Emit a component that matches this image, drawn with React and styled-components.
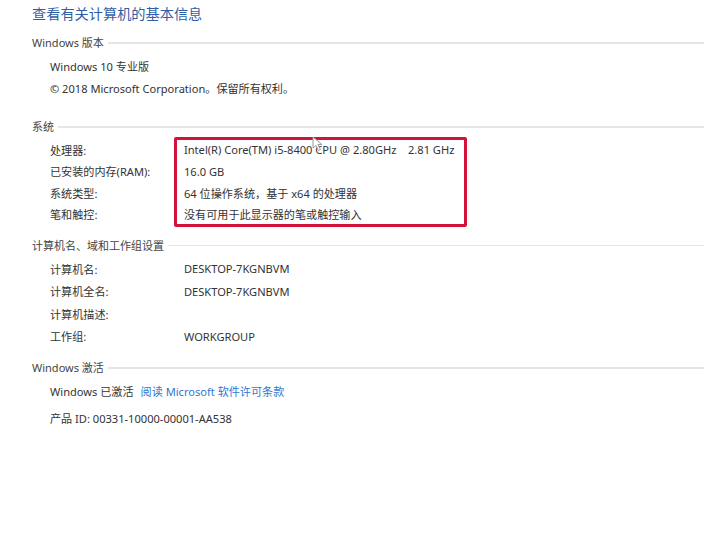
import React from "react";
import styled, { createGlobalStyle } from "styled-components";

const GlobalStyle = createGlobalStyle`
	html, body {
		margin: 0;
		padding: 0;
		background: #fff;
	}
	body {
		font-family: "Segoe UI", "Noto Sans", "Noto Sans CJK SC", sans-serif;
		color: #333;
	}
`;

const Page = styled.div`
	width: 704px;
	height: 534px;
	padding-left: 32px;
	box-sizing: border-box;
	overflow: hidden;
	position: relative;
`;

const Title = styled.h1`
	margin: 0;
	height: 27px;
	line-height: 27px;
	font-size: 14.2px;
	font-weight: 400;
	color: #2f5ea6;
	font-family: "Noto Sans CJK SC", sans-serif;
`;

const Section = styled.section`
	margin-top: ${(p) => p.$top}px;
`;

const SectionHeader = styled.div`
	display: flex;
	align-items: center;
	height: 22px;
	font-size: 11px;
	color: #444;
	&::after {
		content: "";
		flex: 1;
		height: 1.5px;
		margin: 2px 0 0 4px;
		background: #e6e6e6;
	}
`;

const Rows = styled.div`
	position: relative;
	padding: 2px 0 0 18px;
`;

const Row = styled.div`
	display: flex;
	align-items: center;
	height: ${(p) => p.$h || 22}px;
	margin-top: ${(p) => p.$gap || 0}px;
	font-size: 11.1px;
	color: #333;
	white-space: nowrap;
`;

const Label = styled.span`
	width: 134px;
	flex-shrink: 0;
`;

const Value = styled.span``;

const Link = styled.a`
	color: #2f78d2;
	margin-left: 7px;
	text-decoration: none;
`;

const Highlight = styled.div`
	position: absolute;
	left: 142px;
	top: 0;
	width: 293px;
	height: 90px;
	box-sizing: border-box;
	border: 3px solid #d3123b;
	border-radius: 2px;
	pointer-events: none;
`;

const Cursor = styled.svg`
	position: absolute;
	left: 312px;
	top: 136px;
`;

const system = [
	["处理器:", "Intel(R) Core(TM) i5-8400 CPU @ 2.80GHz\u00a0\u00a0\u00a0 2.81 GHz"],
	["已安装的内存(RAM):", "16.0 GB"],
	["系统类型:", "64 位操作系统，基于 x64 的处理器"],
	["笔和触控:", "没有可用于此显示器的笔或触控输入"],
];

const computer = [
	["计算机名:", "DESKTOP-7KGNBVM"],
	["计算机全名:", "DESKTOP-7KGNBVM"],
	["计算机描述:", ""],
	["工作组:", "WORKGROUP"],
];

export default function App() {
	return (
		<>
			<GlobalStyle />
			<Page>
				<Title>查看有关计算机的基本信息</Title>

				<Section $top={4}>
					<SectionHeader>Windows 版本</SectionHeader>
					<Rows>
						<Row>Windows 10 专业版</Row>
						<Row>© 2018 Microsoft Corporation。保留所有权利。</Row>
					</Rows>
				</Section>

				<Section $top={16}>
					<SectionHeader>系统</SectionHeader>
					<Rows>
						{system.map(([label, value]) => (
							<Row key={label} $h={21.5}>
								<Label>{label}</Label>
								<Value>{value}</Value>
							</Row>
						))}
						<Highlight />
					</Rows>
				</Section>

				<Section $top={8.5}>
					<SectionHeader>计算机名、域和工作组设置</SectionHeader>
					<Rows>
						{computer.map(([label, value]) => (
							<Row key={label} $h={22.5}>
								<Label>{label}</Label>
								<Value>{value}</Value>
							</Row>
						))}
					</Rows>
				</Section>

				<Section $top={8.5}>
					<SectionHeader>Windows 激活</SectionHeader>
					<Rows>
						<Row>
							Windows 已激活
							<Link href="#">阅读 Microsoft 软件许可条款</Link>
						</Row>
						<Row $gap={5}>产品 ID: 00331-10000-00001-AA538</Row>
					</Rows>
				</Section>

				<Cursor width="12" height="16" viewBox="0 0 12 16">
					<path
						d="M1 1 L1 12 L4 9.5 L6.5 14.5 L8.5 13.5 L6 8.5 L10 8.5 Z"
						fill="#fff"
						stroke="#9a9a9a"
						strokeWidth="1"
						strokeLinejoin="round"
					/>
				</Cursor>
			</Page>
		</>
	);
}
